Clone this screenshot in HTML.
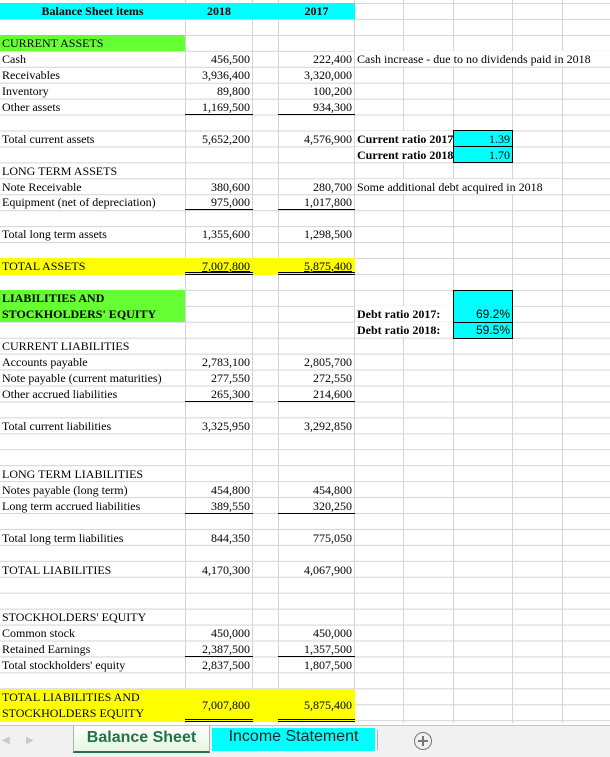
<!DOCTYPE html>
<html><head><meta charset="utf-8"><style>
*{margin:0;padding:0;box-sizing:border-box}
body{width:610px;height:757px;position:relative;overflow:hidden;background:#fff;font-family:"Liberation Serif",serif;font-size:12px;color:#000}
.grid{position:absolute;left:0;top:3px;width:610px;height:720px;background-image:linear-gradient(to bottom,#d4d4d4 1px,transparent 1px);background-size:610px 15.95px;background-position:0 0}
.v{position:absolute;top:0;width:1px;height:723px;background:#d4d4d4}
.bg{position:absolute}
.t{position:absolute;height:16px;line-height:16px;white-space:nowrap}
.a{left:2px}
.b{left:185px;width:65px;text-align:right}
.c{left:278px;width:74px;text-align:right}
.n{left:355px;padding-left:2px;background:#fff;height:15px;top:0}
.bd{font-weight:bold}
.ulb{position:absolute;left:185px;width:68px;height:1px;background:#000}
.ulc{position:absolute;left:278px;width:77px;height:1px;background:#000}
.dlb{position:absolute;left:185px;width:68px;height:3px;border-top:1px solid #000;border-bottom:1px solid #000}
.dlc{position:absolute;left:278px;width:77px;height:3px;border-top:1px solid #000;border-bottom:1px solid #000}
.u{text-decoration:underline}
.box{position:absolute;left:453px;width:60px;background:#00ffff;border:1px solid #000}
.p{position:absolute;left:455px;width:55px;text-align:right;font-family:"Liberation Sans",sans-serif;font-size:12px;height:16px;line-height:16px}
</style></head><body>
<div class="grid"></div>
<div class="v" style="left:185px"></div><div class="v" style="left:252px"></div><div class="v" style="left:278px"></div><div class="v" style="left:354px"></div><div class="v" style="left:403px"></div><div class="v" style="left:453px"></div><div class="v" style="left:512px"></div><div class="v" style="left:562px"></div>

<div class="bg" style="left:0;top:3px;width:355px;height:16px;background:#00ffff"></div>
<div class="t bd" style="left:0;top:3px;width:185px;text-align:center">Balance Sheet items</div>
<div class="t bd" style="left:185px;top:3px;width:68px;text-align:center">2018</div>
<div class="t bd" style="left:278px;top:3px;width:77px;text-align:center">2017</div>

<div class="bg" style="left:0;top:35px;width:185px;height:16px;background:#66ff33"></div>
<div class="t a" style="top:35px">CURRENT ASSETS</div>
<div class="t a" style="top:51px">Cash</div><div class="t b" style="top:51px">456,500</div><div class="t c" style="top:51px">222,400</div><div class="t n" style="top:51px;width:255px">Cash increase - due to no dividends paid in 2018</div>
<div class="t a" style="top:67px">Receivables</div><div class="t b" style="top:67px">3,936,400</div><div class="t c" style="top:67px">3,320,000</div>
<div class="t a" style="top:83px">Inventory</div><div class="t b" style="top:83px">89,800</div><div class="t c" style="top:83px">100,200</div>
<div class="t a" style="top:99px">Other assets</div><div class="t b" style="top:99px">1,169,500</div><div class="t c" style="top:99px">934,300</div>
<div class="ulb" style="top:114px"></div><div class="ulc" style="top:114px"></div>

<div class="t a" style="top:131px">Total current assets</div><div class="t b" style="top:131px">5,652,200</div><div class="t c" style="top:131px">4,576,900</div>
<div class="t n bd" style="top:131px;width:98px;overflow:hidden">Current ratio 2017</div>
<div class="t n bd" style="top:147px;width:98px;overflow:hidden">Current ratio 2018</div>
<div class="box" style="top:130px;height:17px"></div><div class="box" style="top:146px;height:17px"></div>
<div class="p" style="top:131px;font-family:'Liberation Serif',serif">1.39</div><div class="p" style="top:147px;font-family:'Liberation Serif',serif">1.70</div>

<div class="t a" style="top:163px">LONG TERM ASSETS</div>
<div class="t a" style="top:179px">Note Receivable</div><div class="t b" style="top:179px">380,600</div><div class="t c" style="top:179px">280,700</div><div class="t n" style="top:179px;width:207px">Some additional debt acquired in 2018</div>
<div class="t a" style="top:194px">Equipment (net of depreciation)</div><div class="t b" style="top:194px">975,000</div><div class="t c" style="top:194px">1,017,800</div>
<div class="ulb" style="top:209px"></div><div class="ulc" style="top:209px"></div>
<div class="t a" style="top:226px">Total long term assets</div><div class="t b" style="top:226px">1,355,600</div><div class="t c" style="top:226px">1,298,500</div>

<div class="bg" style="left:0;top:258px;width:355px;height:17px;background:#ffff00"></div>
<div class="t a" style="top:258px">TOTAL ASSETS</div><div class="t b u" style="top:258px">7,007,800</div><div class="t c u" style="top:258px">5,875,400</div>
<div class="dlb" style="top:272px"></div><div class="dlc" style="top:272px"></div>

<div class="bg" style="left:0;top:290px;width:185px;height:32px;background:#66ff33"></div>
<div class="t a bd" style="top:290px">LIABILITIES AND</div>
<div class="t a bd" style="top:306px">STOCKHOLDERS' EQUITY</div>
<div class="box" style="top:290px;height:33px;border-bottom:none"></div><div class="box" style="top:322px;height:17px"></div>
<div class="t n bd" style="top:306px;width:98px">Debt ratio 2017:</div><div class="t n bd" style="top:322px;width:98px">Debt ratio 2018:</div>
<div class="p" style="top:306px">69.2%</div><div class="p" style="top:322px">59.5%</div>

<div class="t a" style="top:338px">CURRENT LIABILITIES</div>
<div class="t a" style="top:354px">Accounts payable</div><div class="t b" style="top:354px">2,783,100</div><div class="t c" style="top:354px">2,805,700</div>
<div class="t a" style="top:370px">Note payable (current maturities)</div><div class="t b" style="top:370px">277,550</div><div class="t c" style="top:370px">272,550</div>
<div class="t a" style="top:386px">Other accrued liabilities</div><div class="t b" style="top:386px">265,300</div><div class="t c" style="top:386px">214,600</div>
<div class="ulb" style="top:401px"></div><div class="ulc" style="top:401px"></div>
<div class="t a" style="top:418px">Total current liabilities</div><div class="t b" style="top:418px">3,325,950</div><div class="t c" style="top:418px">3,292,850</div>

<div class="t a" style="top:466px">LONG TERM LIABILITIES</div>
<div class="t a" style="top:482px">Notes payable (long term)</div><div class="t b" style="top:482px">454,800</div><div class="t c" style="top:482px">454,800</div>
<div class="t a" style="top:498px">Long term accrued liabilities</div><div class="t b" style="top:498px">389,550</div><div class="t c" style="top:498px">320,250</div>
<div class="ulb" style="top:513px"></div><div class="ulc" style="top:513px"></div>
<div class="t a" style="top:530px">Total long term liabilities</div><div class="t b" style="top:530px">844,350</div><div class="t c" style="top:530px">775,050</div>
<div class="t a" style="top:562px">TOTAL LIABILITIES</div><div class="t b" style="top:562px">4,170,300</div><div class="t c" style="top:562px">4,067,900</div>

<div class="t a" style="top:609px">STOCKHOLDERS' EQUITY</div>
<div class="t a" style="top:625px">Common stock</div><div class="t b" style="top:625px">450,000</div><div class="t c" style="top:625px">450,000</div>
<div class="t a" style="top:641px">Retained Earnings</div><div class="t b" style="top:641px">2,387,500</div><div class="t c" style="top:641px">1,357,500</div>
<div class="ulb" style="top:656px"></div><div class="ulc" style="top:656px"></div>
<div class="t a" style="top:657px">Total stockholders' equity</div><div class="t b" style="top:657px">2,837,500</div><div class="t c" style="top:657px">1,807,500</div>

<div class="bg" style="left:0;top:689px;width:355px;height:33px;background:#ffff00"></div>
<div class="t a" style="top:689px">TOTAL LIABILITIES AND</div>
<div class="t a" style="top:705px">STOCKHOLDERS EQUITY</div>
<div class="t b" style="top:697px">7,007,800</div><div class="t c" style="top:697px">5,875,400</div>
<div class="dlb" style="top:719px"></div><div class="dlc" style="top:719px"></div>

<div class="bg" style="left:0;top:725px;width:610px;height:32px;background:#f1f1f1;border-top:1px solid #c6c6c6"></div>
<div class="t" style="left:2px;top:733px;color:#c8c8c8;font-size:10px">&#9664;</div>
<div class="t" style="left:26px;top:733px;color:#c8c8c8;font-size:10px">&#9654;</div>
<div class="bg" style="left:73px;top:726px;width:137px;height:27px;background:linear-gradient(#fff,#e6f5e0);border-left:1px solid #b0b0b0;border-right:1px solid #b0b0b0;border-bottom:2px solid #217346"></div>
<div class="t" style="left:73px;top:727px;width:137px;height:22px;line-height:22px;text-align:center;font-family:'Liberation Sans',sans-serif;font-weight:bold;font-size:16px;color:#217346">Balance Sheet</div>
<div class="bg" style="left:212px;top:728px;width:163px;height:23px;background:#00ffff"></div>
<div class="t" style="left:212px;top:727px;width:163px;height:22px;line-height:20px;text-align:center;font-family:'Liberation Sans',sans-serif;font-size:16px;color:#222">Income Statement</div>
<div class="bg" style="left:377px;top:730px;width:1px;height:20px;background:#b0b0b0"></div>
<div class="bg" style="left:414px;top:732px;width:18px;height:18px;border:1.5px solid #777;border-radius:50%"></div>
<div class="bg" style="left:418px;top:740px;width:10px;height:1.5px;background:#777"></div>
<div class="bg" style="left:422.3px;top:736px;width:1.5px;height:10px;background:#777"></div>
</body></html>
